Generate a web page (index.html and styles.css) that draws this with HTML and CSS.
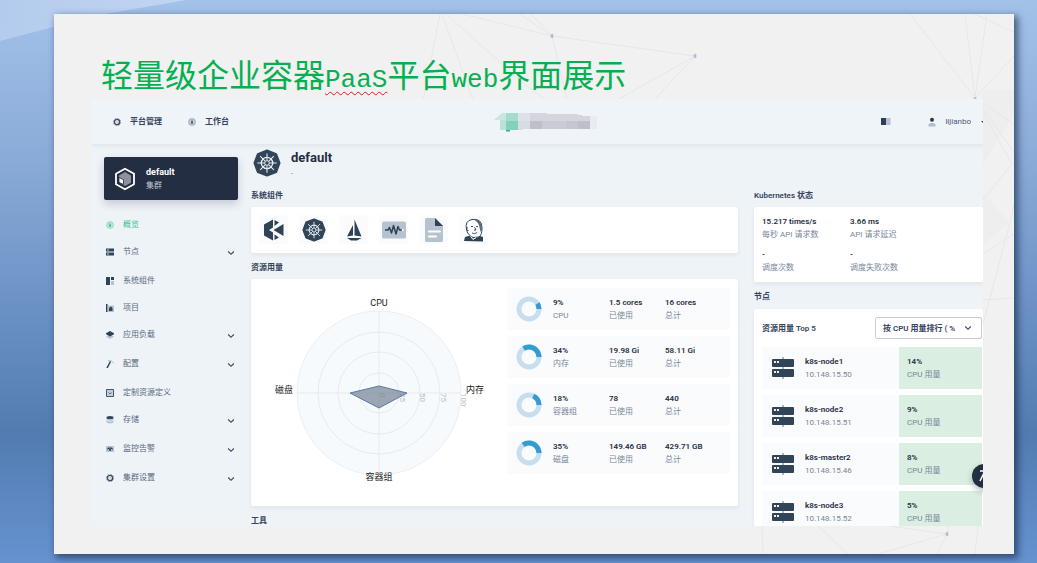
FILE: index.html
```html
<!DOCTYPE html>
<html lang="zh-CN">
<head>
<meta charset="utf-8">
<title>轻量级企业容器PaaS平台web界面展示</title>
<link rel="stylesheet" href="styles.css">
</head>
<body>
<svg class="defs" aria-hidden="true">
  <symbol id="chevron" viewBox="0 0 8 8"><path d="M1.2 2.5L4 5.3L6.800 2.5" fill="none" stroke="#36435c" stroke-width="1.1"/></symbol>
  <symbol id="gear" viewBox="0 0 16 16"><circle cx="8" cy="8" r="5.300" fill="#e3e9ef" stroke="#3c4e61" stroke-width="2.800"/><circle cx="8" cy="8" r="7.300" fill="none" stroke="#3c4e61" stroke-width="1.200" stroke-dasharray="2.8 2.9"/><circle cx="8" cy="8" r="1" fill="#9aa6b3"/></symbol>
  <symbol id="gauge" viewBox="0 0 16 16"><circle cx="8" cy="8" r="7" fill="currentColor" fill-opacity=".25" stroke="currentColor" stroke-opacity=".5" stroke-width="1.4"/><path d="M8 3l2 5.500a2.200 2.200 0 1 1-4 0z" fill="currentColor"/></symbol>
  <symbol id="wheel" viewBox="0 0 32 32">
    <path d="M16 1.500L26.600 5.700L30.500 16L26.600 26.400L16 30.500L5.400 26.400L1.500 16L5.400 5.700Z" fill="#324558" stroke="#324558" stroke-width="2" stroke-linejoin="round"/>
    <g stroke="#e6edf3" fill="none"><circle cx="16" cy="16" r="6.500" stroke-width="1.500"/>
    <path d="M16 5v22M5 16h22M8.200 8.200l15.600 15.600M23.800 8.200L8.200 23.800" stroke-width="1.200"/></g>
    <circle cx="16" cy="16" r="2.600" fill="#324558" stroke="#e6edf3"/>
  </symbol>
  <symbol id="server" viewBox="0 0 22 22">
    <path d="M11 0v22" stroke="#a9b7c7" stroke-width="2"/>
    <rect x="0" y="2" width="22" height="8" rx="1" fill="#324558"/><rect x="0" y="12" width="22" height="8" rx="1" fill="#324558"/>
    <path d="M2 5h2M5 5h2M2 15h2M5 15h2" stroke="#e8eef4" stroke-width="2"/>
  </symbol>
</svg>

<main class="slide">
  <svg class="mesh" viewBox="0 0 960 540" aria-hidden="true">
    <path class="facet" d="M929 76H960V100L929 150ZM929 180L955 208L929 230Z"/>
    <path class="mesh-lines" d="M386 0L369 86M388 0L419 86M392 0L470 70L492 86M408 0L498 22L641 42M466 0L498 22L513 86M477 0L498 22M641 42L563 86M641 42L600 86M856 0L921 84L911 0M921 84L933 0M921 84L960 42M920 0L960 18M921 84L960 110M921 84L958 150L929 186M921 84L960 138M929 240L960 220M929 310L957 205L960 190M929 286L960 284M708 511L709 540M764 512L794 540M836 512L893 520L824 540M893 520L883 540M893 520L895 512M924 512L921 540"/>
    <g fill="#b8bdd2"><ellipse cx="498" cy="22" rx="1.500" ry="2.200"/><ellipse cx="641" cy="42" rx="1.500" ry="2.200"/><ellipse cx="921" cy="85" rx="1.500" ry="2"/><ellipse cx="893" cy="520" rx="1.500" ry="2.200"/></g>
  </svg>
  <h1 class="slide-title">轻量级企业容器<span class="latin misspelt">PaaS</span>平台<span class="latin">web</span>界面展示</h1>

  <div class="app">
    <header class="topbar">
      <nav class="topnav">
        <a href="#"><svg class="icon"><use href="#gear"/></svg>平台管理</a>
        <a href="#"><svg class="icon slate"><use href="#gauge"/></svg>工作台</a>
      </nav>
      <svg class="brand" viewBox="0 0 104 20" aria-hidden="true">
        <path d="M0 8L8 1h6v7z" fill="#c9e6e0"/><path d="M6 8h6v10H6z" fill="#b9e2d8"/>
        <path d="M12 1h12v8H12z" fill="#a3dcce"/><path d="M12 9h12v9H12z" fill="#84d1bb"/><path d="M12 18h4v1.500h-4z" fill="#36ab8e"/>
        <path d="M24 1h12v8H24z" fill="#dee1ea"/><path d="M24 9h12v8h-7v1h-5z" fill="#d8dae4"/>
        <path d="M36 1h17v1h31v1h4v1h8v5H36z" fill="#d4d6de"/><path d="M36 9h12v8H36z" fill="#bfbfca"/><path d="M48 9h24v8H48z" fill="#cacbd4"/><path d="M72 9h12v8H72z" fill="#c5c6d0"/><path d="M84 9h12v8H84z" fill="#bebfc9"/><path d="M96 4h7v13h-7z" fill="#e8ebf2"/>
      </svg>
      <div class="account">
        <svg class="book" viewBox="0 0 10 7" aria-label="文档"><path d="M0 0h5v7H0z" fill="#2b4054"/><path d="M5 0h4.500v7H5z" fill="#b6c2cf"/></svg>
        <button class="user" type="button">
          <svg class="person" viewBox="0 0 8 10"><circle cx="4" cy="2.800" r="2" fill="#26394c"/><path d="M.5 9.500V8q0-2 3.500-2t3.500 2v1.500z" fill="#aebccb"/></svg>
          lijianbo
        </button>
        <svg class="caret" viewBox="0 0 2 4"><path d="M0 1h2v2z" fill="#324558"/></svg>
      </div>
    </header>

    <div class="workspace">
      <aside class="sidebar">
        <a class="cluster" href="#">
          <svg class="cluster-icon" viewBox="0 0 22 24"><path d="M11 1.800L20 6.800V17.200L11 22.200L2 17.200V6.800Z" fill="none" stroke="#fff" stroke-width="1.800"/><path d="M11 5l6 3.400v7.400L11 19l-6-3.400V8.400z" fill="#8b929f"/><path d="M5 10.500l4.500 2.200v4.800L5 15.300z" fill="#fff" stroke="#242e42" stroke-width=".8"/></svg>
          <span><strong>default</strong><small>集群</small></span>
        </a>
        <nav class="menu">
          <a class="active" href="#"><svg class="icon"><use href="#gauge"/></svg>概览</a>
          <button type="button"><svg class="icon" viewBox="0 0 8 8"><path d="M0 .5h8v3H0zM0 4.500h8v3H0z" fill="#2f4357"/><path d="M1 2h2M1 6h2" stroke="#c5d0db"/></svg>节点<svg class="icon arrow"><use href="#chevron"/></svg></button>
          <a href="#"><svg class="icon" viewBox="0 0 8 8"><path d="M0 0h4v8H0zM5 0h3v3H5z" fill="#2f4357"/><path d="M5 4h3v4H5z" fill="#b6c2cf"/></svg>系统组件</a>
          <a href="#"><svg class="icon" viewBox="0 0 8 8"><path d="M2 1.500h6V8H2z" fill="#b6c2cf"/><path d="M0 0h1.500v8H0zM3 4l2-1.500L6.500 4v3H3z" fill="#2f4357"/></svg>项目</a>
          <button type="button"><svg class="icon" viewBox="0 0 8 8"><path d="M4 4l4 1.500L4 8 0 5.500z" fill="#b6c2cf"/><path d="M4 0l4 2.200v1L4 5.400 0 3.200v-1z" fill="#2f4357"/></svg>应用负载<svg class="icon arrow"><use href="#chevron"/></svg></button>
          <button type="button"><svg class="icon" viewBox="0 0 8 8"><path d="M2 .7Q6 0 7.500 3" fill="none" stroke="#aab8c6"/><path d="M4.500 1.500L1 8" stroke="#2f4357" stroke-width="1.500"/></svg>配置<svg class="icon arrow"><use href="#chevron"/></svg></button>
          <a href="#"><svg class="icon" viewBox="0 0 8 8"><path d="M.5.500h7v7h-7z" fill="#c3ced9" stroke="#44566a"/><path d="M2.500 3.500L4 5l1.500-1.500" fill="none" stroke="#44566a" stroke-width=".8"/></svg>定制资源定义</a>
          <button type="button"><svg class="icon" viewBox="0 0 8 8"><path d="M.5 1.500v5q3.500 2.200 7 0v-5z" fill="#b6c2cf"/><path d="M.5 4.500q3.500 1.500 7 0" stroke="#eef3f8" fill="none" stroke-width=".7"/><ellipse cx="4" cy="1.500" rx="3.500" ry="1.500" fill="#2f4357"/></svg>存储<svg class="icon arrow"><use href="#chevron"/></svg></button>
          <button type="button"><svg class="icon" viewBox="0 0 8 8"><path d="M0 1h8v6H0z" fill="#b6c2cf"/><path d="M1 4h1.200L3 2.500l1 3.500 1-3.500L5.800 4H7" fill="none" stroke="#2f4357"/></svg>监控告警<svg class="icon arrow"><use href="#chevron"/></svg></button>
          <button type="button"><svg class="icon"><use href="#gear"/></svg>集群设置<svg class="icon arrow"><use href="#chevron"/></svg></button>
        </nav>
      </aside>

      <section class="overview">
        <div class="heading">
          <svg class="heading-icon"><use href="#wheel"/></svg>
          <div><h2>default</h2><p>-</p></div>
        </div>
        <h3>系统组件</h3>
        <div class="card components">
          <a class="tile" href="#" aria-label="KubeSphere"><svg viewBox="0 0 24 24"><path d="M2 6.500L11 1.500v8L7 12l4 2.500v8l-9-5z" fill="#2f4357"/><path d="M12.500 2l4.500 2.500-4.500 3.500zM21.500 6v12L11.500 12zM12.500 16.500l4.500 3-4.500 2.500z" fill="#2f4357"/></svg></a>
          <a class="tile" href="#" aria-label="Kubernetes"><svg><use href="#wheel"/></svg></a>
          <a class="tile" href="#" aria-label="Istio"><svg viewBox="0 0 24 24"><path d="M11 7L5 18.500l6-1zM12.500 1.500v16l7 1z" fill="#2f4357"/><path d="M5 20h14.500L15 22.500H9z" fill="#2f4357"/></svg></a>
          <a class="tile" href="#" aria-label="监控"><svg viewBox="0 0 24 24"><rect y="3.500" width="24" height="17" rx="1.500" fill="#b6c2cf"/><path d="M3 12h3l1.500-2.500L9.500 15l2-7.500 2.500 8.500 2-7.500 1.500 3.500H20" fill="none" stroke="#2f4357" stroke-width="1.500" stroke-linejoin="round"/><circle cx="20.800" cy="12" r="1" fill="#fff"/></svg></a>
          <a class="tile" href="#" aria-label="日志"><svg viewBox="0 0 24 24"><path d="M4.500 0H13l8 8v14.500q0 1.500-1.500 1.500h-15Q3 24 3 22.500v-21Q3 0 4.500 0z" fill="#b6c2cf"/><path d="M13 0l8 8h-8z" fill="#2f4357"/><path d="M7 13.500h11M7 18.500h7" stroke="#fff" stroke-width="2" stroke-linecap="round"/></svg></a>
          <a class="tile" href="#" aria-label="Jenkins"><svg viewBox="0 0 24 24"><path d="M4.500 11Q2.500 3 10 1.500q10-1.500 10 8.500 0 7-3 9l-6 .5q-6-3-6.500-8.500z" fill="#fff" stroke="#2f4357"/><path d="M11 1.200q9-.5 9 9.800l-1.500 3-1-4.500Q17 4 11 1.200z" fill="#5c6c7b"/><path d="M9 8.500h2M14 8.500h2M10 15q3 1.500 5-.5M12.500 9l1.500 3h-2M6 10q-1.500-1-1.500 1t2 1.500" fill="none" stroke="#2f4357" stroke-width=".9"/><path d="M2 23l1-4 5-1.500 4 3.500 6-3 3 1v4.500z" fill="#2f4357"/><path d="M8 17.500l3 4 3-2" fill="none" stroke="#fff"/></svg></a>
        </div>
        <h3>资源用量</h3>
        <div class="card usage">
          <svg class="radar" viewBox="0 0 256 227" role="img" aria-label="资源用量雷达图">
            <circle cx="128" cy="114" r="82" fill="#f6fafd" stroke="#eceff1"/>
            <g fill="none" stroke="#e8ebed"><circle cx="128" cy="114" r="61"/><circle cx="128" cy="114" r="41"/><circle cx="128" cy="114" r="20"/><path d="M128 32v164M46 114h164"/></g>
            <g class="ticks"><text transform="translate(129 114) rotate(90)">0</text><text transform="translate(149 114) rotate(90)">25</text><text transform="translate(169 114) rotate(90)">50</text><text transform="translate(190 114) rotate(90)">75</text><text transform="translate(210 114) rotate(90)">100</text></g>
            <path d="M128 107L156 114L128 129L99 114Z" fill="#6c7a8b" fill-opacity=".65" stroke="#5a78a6"/>
            <g class="axes"><text x="128" y="24">CPU</text><text x="224" y="111">内存</text><text x="128" y="198">容器组</text><text x="33" y="111">磁盘</text></g>
          </svg>
          <div class="meters">
            <div class="meter"><svg class="donut" viewBox="0 0 26 26"><circle cx="13" cy="13" r="10"/><path pathLength="100" stroke-dasharray="9 100" d="M23 13A10 10 0 0 0 3 13A10 10 0 0 0 23 13"/></svg><p><b>9%</b>CPU</p><p><b>1.5 cores</b>已使用</p><p><b>16 cores</b>总计</p></div>
            <div class="meter"><svg class="donut" viewBox="0 0 26 26"><circle cx="13" cy="13" r="10"/><path pathLength="100" stroke-dasharray="34 100" d="M23 13A10 10 0 0 0 3 13A10 10 0 0 0 23 13"/></svg><p><b>34%</b>内存</p><p><b>19.98 Gi</b>已使用</p><p><b>58.11 Gi</b>总计</p></div>
            <div class="meter"><svg class="donut" viewBox="0 0 26 26"><circle cx="13" cy="13" r="10"/><path pathLength="100" stroke-dasharray="18 100" d="M23 13A10 10 0 0 0 3 13A10 10 0 0 0 23 13"/></svg><p><b>18%</b>容器组</p><p><b>78</b>已使用</p><p><b>440</b>总计</p></div>
            <div class="meter"><svg class="donut" viewBox="0 0 26 26"><circle cx="13" cy="13" r="10"/><path pathLength="100" stroke-dasharray="35 100" d="M23 13A10 10 0 0 0 3 13A10 10 0 0 0 23 13"/></svg><p><b>35%</b>磁盘</p><p><b>149.46 GB</b>已使用</p><p><b>429.71 GB</b>总计</p></div>
          </div>
        </div>
        <h3>工具</h3>
      </section>

      <section class="status">
        <h3>Kubernetes 状态</h3>
        <div class="card stats">
          <p><b>15.217 times/s</b>每秒 API 请求数</p><p><b>3.66 ms</b>API 请求延迟</p>
          <p><b>-</b>调度次数</p><p><b>-</b>调度失败次数</p>
        </div>
        <h3>节点</h3>
        <div class="card nodes">
          <div class="nodes-head">
            <label for="rank">资源用量 Top 5</label>
            <span class="picker"><select id="rank"><option>按 CPU 用量排行 ( %</option></select><svg class="icon"><use href="#chevron"/></svg></span>
          </div>
          <div class="node"><svg class="server"><use href="#server"/></svg><p><b>k8s-node1</b>10.148.15.50</p><p class="load"><b>14%</b>CPU 用量</p></div>
          <div class="node"><svg class="server"><use href="#server"/></svg><p><b>k8s-node2</b>10.148.15.51</p><p class="load"><b>9%</b>CPU 用量</p></div>
          <div class="node"><svg class="server"><use href="#server"/></svg><p><b>k8s-master2</b>10.148.15.46</p><p class="load"><b>8%</b>CPU 用量</p></div>
          <div class="node"><svg class="server"><use href="#server"/></svg><p><b>k8s-node3</b>10.148.15.52</p><p class="load"><b>5%</b>CPU 用量</p></div>
        </div>
      </section>
    </div>
    <button class="tools" type="button" aria-label="工具箱"><svg viewBox="0 0 24 24"><path d="M8 7h6M12 9l-4 8" stroke="#fff" stroke-width="1.500" fill="none"/></svg></button>
  </div>
</main>
</body>
</html>
```

FILE: styles.css
```css
* { box-sizing: border-box; }

body {
  margin: 0;
  height: 100vh;
  padding: 14px 23px 9px 54px;
  position: relative;
  overflow: hidden;
  background: linear-gradient(#a3c2ea 0%, #8cadd9 26%, #6c92c5 54%, #527cb0 77%, #6692d0 100%);
  font: 8px/13px Roboto, "Noto Sans CJK SC", sans-serif;
  color: #79879c;
}

body::before {
  content: "";
  position: absolute;
  top: 0;
  left: 0;
  width: 186px;
  height: 41px;
  background: linear-gradient(100deg, #b3cbed, #c2d6f3);
  clip-path: polygon(0 0, 100% 0, 58% 33%, 29% 65%, 0 100%);
}

h1, h2, h3, p { margin: 0; }
a { color: inherit; text-decoration: none; }
button { border: 0; padding: 0; background: none; font: inherit; color: inherit; }
b { display: block; font-weight: 600; color: #242e42; }
.defs { position: absolute; width: 0; height: 0; }
.icon { width: 8px; height: 8px; flex: none; }

.slide {
  position: relative;
  height: 100%;
  padding: 41px 31px 28px 38px;
  display: flex;
  flex-direction: column;
  background: #f1f1f1;
  box-shadow: 3px 3px 7px 1px rgba(20, 40, 75, .65);
}
.mesh { position: absolute; inset: 0; width: 100%; height: 100%; }
.mesh-lines { fill: none; stroke: #e6e7ea; }
.facet { fill: #eeeeee; }

.slide-title {
  position: relative;
  height: 44px;
  padding-left: 9px;
  font: 400 32px/36px "Noto Sans CJK SC", sans-serif;
  color: #06b050;
  white-space: nowrap;
}
.latin { font-family: "Liberation Mono", monospace; font-size: 26px; }
.misspelt { text-decoration: underline wavy #d82020 1px; text-underline-offset: 4px; }

.app {
  position: relative;
  flex: 1;
  min-height: 0;
  overflow: hidden;
  background: #eef3f8;
}

.topbar {
  position: relative;
  height: 46px;
  padding: 0 0 0 21px;
  display: grid;
  grid-template-columns: 381px auto 1fr;
  align-items: center;
  background: #eff4f9;
  border-bottom: 1px solid #e1e8f0;
  box-shadow: 0 2px 3px rgba(36, 46, 66, .05);
}
.topnav { display: flex; gap: 26px; font-weight: 600; color: #36435c; }
.topnav a { display: flex; align-items: center; gap: 9px; }
.slate { color: #4a5c70; }
.brand { width: 104px; height: 20px; }
.account { display: flex; align-items: center; justify-content: flex-end; color: #4a5974; }
.book { width: 10px; height: 7px; margin-right: 37px; }
.user { display: flex; align-items: center; gap: 9px; margin-right: 10px; }
.person { width: 8px; height: 10px; }
.caret { width: 2px; height: 4px; }

.workspace {
  display: grid;
  grid-template-columns: 147px minmax(0, 487fr) minmax(0, 229fr);
  column-gap: 16px;
  margin-left: -4px;
}

.sidebar { padding: 12px 0 0 16px; }
.cluster {
  display: flex;
  align-items: center;
  gap: 10px;
  height: 43px;
  width: 134px;
  padding-left: 10px;
  border-radius: 2px;
  background: #242e42;
  box-shadow: 0 4px 8px rgba(36, 46, 66, .2);
  color: #c3c9d3;
}
.cluster-icon { width: 22px; height: 24px; }
.cluster strong { display: block; font-size: 9px; color: #fff; }
.cluster small { display: block; font-size: 8px; }

.menu { width: 134px; margin-top: 11px; color: #5a6880; }
.menu a, .menu button {
  display: flex;
  align-items: center;
  gap: 9px;
  width: 100%;
  height: 27px;
  padding-left: 2px;
  text-align: left;
}
.menu button { height: 29px; padding-bottom: 2px; }
.menu .arrow { margin: 3px 3px 0 auto; }
.menu .active { color: #3fbf8c; }

h3 { font-size: 8px; line-height: 14px; font-weight: 600; color: #36435c; }
.card {
  border-radius: 2px;
  background: #fff;
  box-shadow: 0 2px 4px rgba(36, 46, 66, .07);
}

.heading { display: flex; gap: 10px; height: 44px; padding: 4px 0 0 2px; }
.heading-icon { width: 28px; height: 28px; }
.heading h2 { font-size: 13px; line-height: 18px; color: #242e42; }

.components { display: flex; gap: 11px; margin: 4px 0 8px; padding: 8px; height: 46px; }
.tile { display: grid; place-items: center; width: 29px; height: 29px; background: #fafbfd; }
.tile svg { width: 24px; height: 24px; }

.usage { display: flex; height: 227px; margin: 4px 0 8px; }
.radar { flex: 1; min-width: 0; }
.radar text { font-size: 8px; dominant-baseline: central; }
.axes { fill: #222; text-anchor: middle; }
.ticks { fill: #b9bcc0; }
.ticks text { dominant-baseline: auto; }
.axes text { font-size: 9px; }
.meters { display: grid; gap: 6px; align-content: start; width: 223px; margin: 9px 8px 0 0; }
.meter {
  display: grid;
  grid-template-columns: 27px 46px 46px 1fr;
  column-gap: 10px;
  align-items: center;
  height: 42px;
  padding-left: 9px;
  background: #fafbfd;
}
.donut { width: 26px; height: 26px; }
.donut * { fill: none; stroke: #c6deef; stroke-width: 5; }
.donut path { stroke: #329dce; }

.status { padding-top: 44px; }
.stats {
  display: grid;
  grid-template-columns: 88px 1fr;
  gap: 6px 0;
  margin: 4px 0 8px;
  padding: 8px;
  height: 75px;
}
.nodes { margin-top: 5px; padding: 8px 1px 8px 8px; }
.nodes-head { display: flex; justify-content: space-between; align-items: center; margin-bottom: 8px; font-weight: 600; color: #36435c; }
.picker { position: relative; display: flex; align-items: center; }
.picker select {
  appearance: none;
  width: 107px;
  height: 22px;
  padding: 0 18px 0 7px;
  border: 1px solid #c5ccd6;
  border-radius: 2px;
  background: #fff;
  font: inherit;
  color: #36435c;
}
.picker .icon { position: absolute; right: 10px; }
.node {
  display: grid;
  grid-template-columns: 22px 1fr 83px;
  column-gap: 11px;
  align-items: center;
  height: 42px;
  margin-bottom: 6px;
  padding-left: 10px;
  background: #fafbfd;
}
.server { width: 22px; height: 22px; }
.load { align-self: stretch; padding: 8px; background: #daeee1; }

.tools {
  position: absolute;
  right: -13px;
  bottom: 38px;
  width: 24px;
  height: 24px;
  border-radius: 50%;
  background: #242e42;
  box-shadow: 0 3px 6px rgba(36, 46, 66, .3);
}
```
